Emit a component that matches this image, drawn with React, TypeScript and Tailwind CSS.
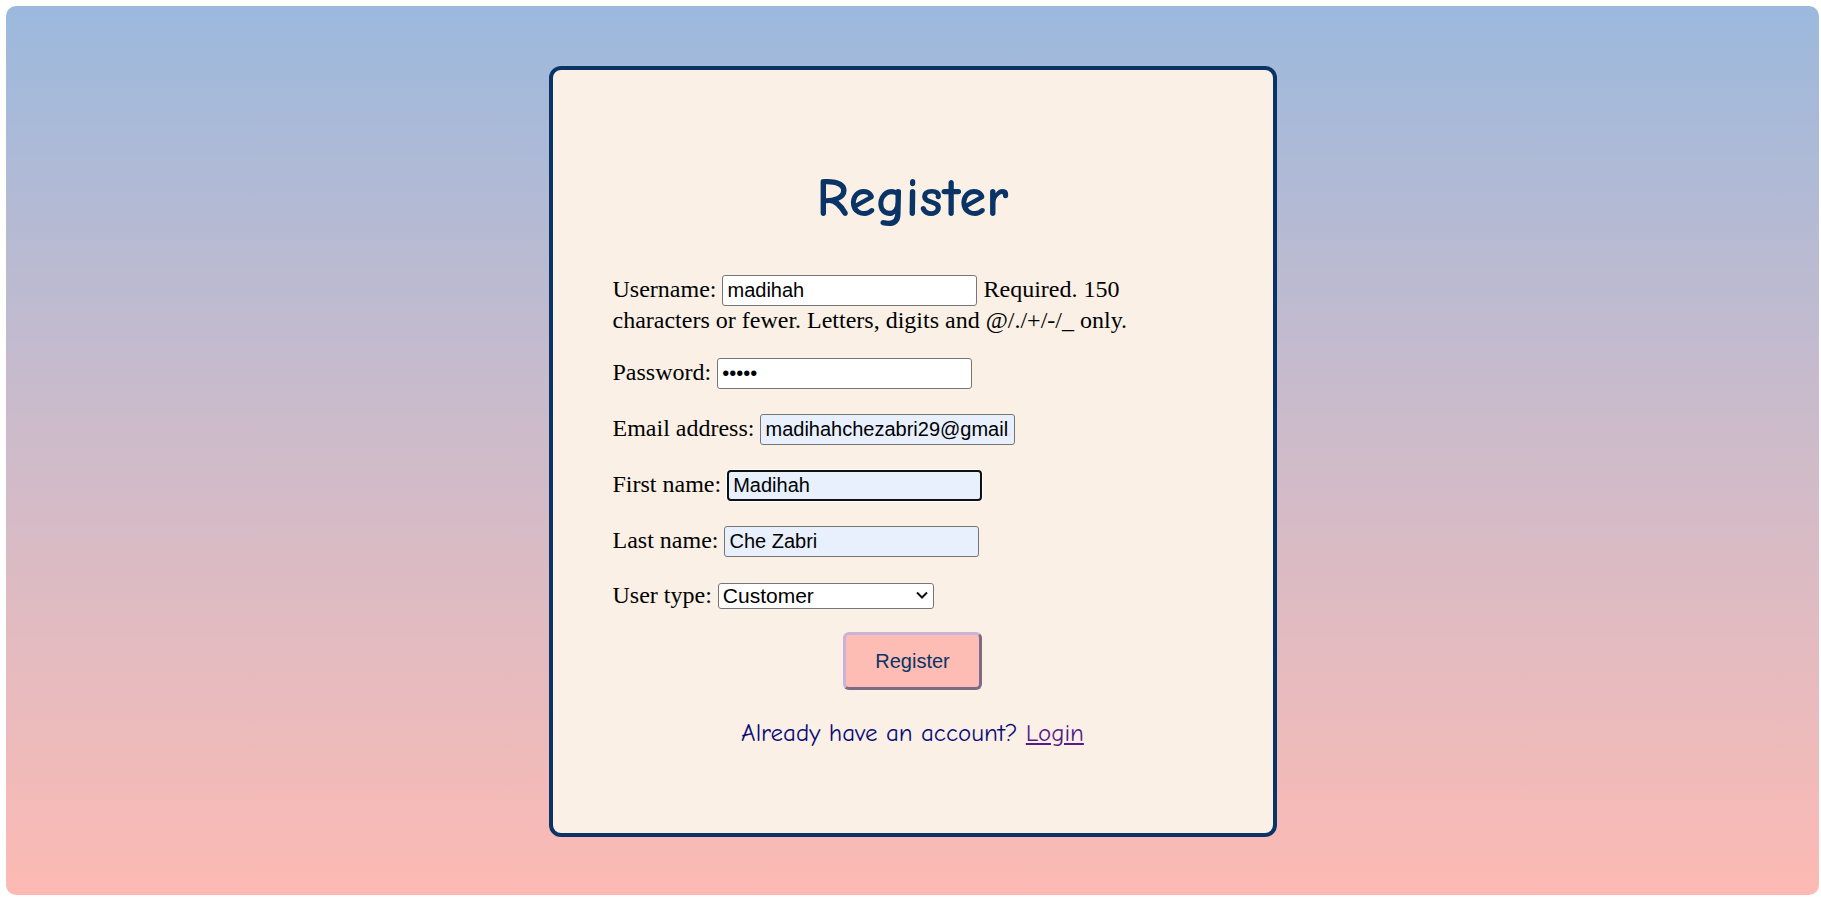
import React, { useState } from 'react';

const comic = { fontFamily: '"Comic Sans MS", "Comic Neue", Lato, sans-serif' };

export default function App() {
  const [username, setUsername] = useState('madihah');
  const [password, setPassword] = useState('12345');
  const [email, setEmail] = useState('madihahchezabri29@gmail.com');
  const [firstName, setFirstName] = useState('Madihah');
  const [lastName, setLastName] = useState('Che Zabri');
  const [userType, setUserType] = useState('customer');

  const inputShape =
    'h-[31px] w-[255px] rounded-[3px] px-[4px] align-baseline text-[20px] text-black outline-none font-["Liberation_Sans",Arial,sans-serif]';
  const inputBase = `${inputShape} border border-[#767676]`;

  return (
    <div className="min-h-[900px] bg-white pt-[6px]">
      <div className="ml-[6px] mr-[2px] flex h-[889px] justify-center rounded-[10px] bg-gradient-to-b from-[#9bb9dd] to-[#fdbab3] pt-[60px]">
        <div className="h-[771px] w-[728px] rounded-[12px] border-[4px] border-[#0a3366] bg-[#faf0e6] px-[60px] pt-[60px] font-['Liberation_Serif','Times_New_Roman',serif] text-[24px] leading-[28px] text-black">
          <h1
            style={comic}
            className="mt-[35px] text-center text-[55px] font-extrabold leading-[67px] text-[#0a3366]"
          >
            Register
          </h1>

          <form className="mt-[43px]" onSubmit={(e) => e.preventDefault()}>
            <p className="mb-[22px] leading-[29px]">
              Username:{' '}
              <input
                type="text"
                value={username}
                onChange={(e) => setUsername(e.target.value)}
                className={`${inputBase} bg-white`}
              />{' '}
              Required. 150 characters or fewer. Letters, digits and @/./+/-/_ only.
            </p>

            <p className="mb-[24px] leading-[31px]">
              Password:{' '}
              <input
                type="password"
                value={password}
                onChange={(e) => setPassword(e.target.value)}
                className={`${inputBase} bg-white`}
              />
            </p>

            <p className="mb-[24px] leading-[31px]">
              Email address:{' '}
              <input
                type="email"
                value={email}
                onChange={(e) => setEmail(e.target.value)}
                className={`${inputBase} bg-[#e8f0fe]`}
              />
            </p>

            <p className="mb-[24px] leading-[31px]">
              First name:{' '}
              <input
                type="text"
                value={firstName}
                onChange={(e) => setFirstName(e.target.value)}
                className={`${inputShape} rounded-[4px] border-[2px] border-[#101010] bg-[#e8f0fe] ring-1 ring-white`}
              />
            </p>

            <p className="mb-[24px] leading-[31px]">
              Last name:{' '}
              <input
                type="text"
                value={lastName}
                onChange={(e) => setLastName(e.target.value)}
                className={`${inputBase} bg-[#e8f0fe]`}
              />
            </p>

            <p className="mb-[23px] leading-[28px]">
              User type:{' '}
              <span className="relative inline-block align-baseline">
                <select
                  value={userType}
                  onChange={(e) => setUserType(e.target.value)}
                  className="h-[26px] w-[216px] appearance-none rounded-[3px] border border-[#767676] bg-white pl-[4px] align-baseline font-['Liberation_Sans',Arial,sans-serif] text-[21px] leading-[24px] text-black outline-none"
                >
                  <option value="customer">Customer</option>
                  <option value="admin">Admin</option>
                </select>
                <svg
                  className="pointer-events-none absolute right-[5px] top-1/2 -translate-y-1/2"
                  width="14"
                  height="10"
                  viewBox="0 0 14 10"
                >
                  <path d="M2 2.5l5 5 5-5" fill="none" stroke="#111" strokeWidth="2" />
                </svg>
              </span>
            </p>

            <div className="flex justify-center">
              <button
                type="submit"
                className="h-[58px] w-[139px] cursor-pointer rounded-[6px] border-[3px] border-t-[#c9b3d6] border-l-[#c9b3d6] border-b-[#7b6b85] border-r-[#7b6b85] bg-[#fdbcb4] font-['Liberation_Sans',Arial,sans-serif] text-[20px] text-[#0a3366]"
              >
                Register
              </button>
            </div>
          </form>

          <p style={comic} className="mt-[26px] text-center text-[25px] leading-[33px] text-[#0a0a78]">
            Already have an account?{' '}
            <a href="#" className="text-[#551a8b] underline">
              Login
            </a>
          </p>
        </div>
      </div>
    </div>
  );
}
